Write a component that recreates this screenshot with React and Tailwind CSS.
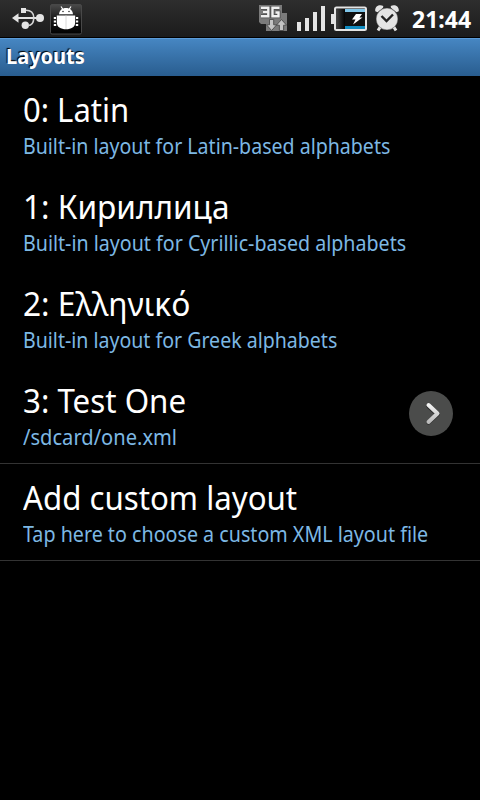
const rows = [
  { title: "0: Latin", sub: "Built-in layout for Latin-based alphabets", titleFit: "scale-x-[.94]", subFit: "scale-x-[.932]" },
  { title: "1: Кириллица", sub: "Built-in layout for Cyrillic-based alphabets", titleFit: "scale-x-[.957]", subFit: "scale-x-[.935]" },
  { title: "2: Ελληνικό", sub: "Built-in layout for Greek alphabets", titleFit: "scale-x-[.96]", subFit: "scale-x-[.931]" },
  { title: "3: Test One", sub: "/sdcard/one.xml", titleFit: "scale-x-[.948]", subFit: "scale-x-[.957]", more: true, line: true },
  { title: "Add custom layout", sub: "Tap here to choose a custom XML layout file", titleFit: "scale-x-[.946]", subFit: "scale-x-[.9375]", line: true },
];

function UsbIcon() {
  return (
    <svg className="ml-3 h-[37px] w-8 shrink-0" viewBox="12 0 32 37" fill="#e4e4e4">
      <path d="M12 18l6.500-4.700v9.400z" />
      <path d="M17 17h22v2H17z" />
      <circle cx="40" cy="18" r="4" />
      <path d="M21 8h5v5h-5z" />
      <circle cx="25.300" cy="25.300" r="3.700" />
      <path d="M26 10.300c5 0 7.500 2.500 7.800 7.200M28 25.500c4 0 5.600-3 5.800-7.500" fill="none" stroke="#d4d4d4" strokeWidth="1.600" />
    </svg>
  );
}

function DebugIcon() {
  return (
    <svg className="ml-1.5 h-[37px] w-8 shrink-0" viewBox="50 0 32 37">
      <defs>
        <linearGradient id="debug" x1="0" y1="0" x2="0" y2="1">
          <stop offset="0" stopColor="#4a4a4a" />
          <stop offset=".55" stopColor="#141414" />
          <stop offset="1" stopColor="#000" />
        </linearGradient>
      </defs>
      <rect x="50.500" y="4.500" width="31" height="29.500" rx="1.500" fill="url(#debug)" stroke="#484848" />
      <g fill="#fff">
        <path d="M59 14.300c.4-4.300 3.300-6.300 7-6.300s6.600 2 7 6.300z" />
        <path d="M56.800 15.500h18.400v7c0 4.500-4 6.800-9.200 6.800s-9.200-2.300-9.200-6.800z" />
        <path d="M53.800 17h2.200v2h-2.200zM53.800 20.500h2.200v2h-2.200zM53.800 24h2.400v2h-2.400zM76 17h2.200v2H76zM76 20.500h2.200v2H76zM75.800 24h2.400v2h-2.400z" />
      </g>
      <path d="M61 6.500l2 3M71 6.500l-2 3" stroke="#fff" strokeWidth="1.200" />
      <path d="M66 15.500v13.500" stroke="#d8d8d8" />
      <circle cx="63" cy="11.500" r=".8" fill="#333" />
      <circle cx="69" cy="11.500" r=".8" fill="#333" />
    </svg>
  );
}

function NetworkIcon() {
  return (
    <svg className="h-[37px] w-7 shrink-0" viewBox="259 0 28 37">
      <path d="M259 5h23v8h5v18h-21v-7h-5l-2-2z" fill="#7b7b7b" />
      <path d="M261 7.800h7.300v8.400H261M263 12h5M279.500 7.800h-7v8.400h6v-3.700h-3" fill="none" stroke="#4b4b4b" strokeWidth="4" />
      <path d="M261 7.800h7.300v8.400H261M263 12h5M279.500 7.800h-7v8.400h6v-3.700h-3" fill="none" stroke="#f0f0f0" strokeWidth="2.400" />
      <path d="M269.500 19.500h4.200v5.300h3l-5.100 5.700-5.100-5.700h3zM279.400 30.500h4.200v-5.300h3l-5.100-5.700-5.100 5.700h3z" fill="#c4c4c4" stroke="#4b4b4b" strokeWidth=".9" />
    </svg>
  );
}

function SignalIcon() {
  return (
    <svg className="ml-2 h-[37px] w-[31px] shrink-0" viewBox="295 0 31 37" fill="#e4e4e4">
      <path d="M297 22h4v9h-4zM305 18h4v13h-4zM313 12h4v19h-4zM321 6h4v25h-4z" />
    </svg>
  );
}

function BatteryIcon() {
  return (
    <svg className="ml-[5px] h-[37px] w-9 shrink-0" viewBox="331 0 36 37">
      <defs>
        <linearGradient id="cell" x1="0" y1="0" x2="1" y2="0">
          <stop offset="0" stopColor="#444" />
          <stop offset="1" stopColor="#050505" />
        </linearGradient>
      </defs>
      <path d="M331 14h4v10h-4z" fill="#e4e4e4" />
      <rect x="335" y="7.500" width="31" height="22.500" rx="1.500" fill="#101010" stroke="#e4e4e4" strokeWidth="2" />
      <path d="M336 9h9v20h-9z" fill="url(#cell)" />
      <path d="M345 9h20v3h-20z" fill="#7fc5e8" />
      <path d="M345 26h20v3h-20z" fill="#108bc0" />
      <path d="M356 14h6l-2.500 3.500h3L353 24.500l2.500-5H352z" fill="#fff" />
    </svg>
  );
}

function AlarmIcon() {
  return (
    <svg className="ml-2 h-[37px] w-6 shrink-0" viewBox="375 0 24 37">
      <path d="M375.300 11.300c-.8-4.500 3.500-7.300 8-5.300l-.3 1.700-5.500 4.600zM398.700 11.300c.8-4.500-3.500-7.300-8-5.300l.3 1.700 5.500 4.600z" fill="#e4e4e4" />
      <path d="M380.500 26.500l-2.500 4M393.500 26.500l2.500 4" stroke="#e4e4e4" strokeWidth="3" />
      <circle cx="387" cy="19" r="10.900" fill="#e4e4e4" stroke="#252525" strokeWidth=".4" />
      <path d="M381.500 16l5 5 6.500-6.500" fill="none" stroke="#222" strokeWidth="2.400" />
    </svg>
  );
}

function MoreButton() {
  return (
    <svg className="mr-[27px] mb-[3px] h-[45px] w-11 shrink-0" viewBox="409 391 44 45">
      <defs>
        <linearGradient id="chevron" x1="0" y1="0" x2="0" y2="1">
          <stop offset="0" stopColor="#f4f4f4" />
          <stop offset="1" stopColor="#bbb" />
        </linearGradient>
      </defs>
      <ellipse cx="431" cy="413.500" rx="22" ry="22.500" fill="#4b4c4b" />
      <path d="M428.500 406.500l9 8-9 8" fill="none" stroke="#2b2b2b" strokeWidth="4.200" strokeLinecap="round" strokeLinejoin="round" />
      <path d="M428.500 405l9 8.500-9 8.500" fill="none" stroke="url(#chevron)" strokeWidth="4" strokeLinecap="round" strokeLinejoin="round" />
    </svg>
  );
}

export default function App() {
  return (
    <div className="flex h-[800px] w-[480px] flex-col overflow-hidden bg-black font-['Noto_Sans','Open_Sans',sans-serif] text-white">
      <div className="flex h-[38px] shrink-0 items-start border-b border-black bg-linear-to-b from-[#2e2e2e] to-[#1b1b1b]">
        <UsbIcon />
        <DebugIcon />
        <div className="ml-auto flex">
          <NetworkIcon />
          <SignalIcon />
          <BatteryIcon />
          <AlarmIcon />
          <span className="ml-[13px] w-[68px] whitespace-nowrap text-[23px] leading-[38px] font-bold">21:44</span>
        </div>
      </div>
      <div className="flex h-[38px] shrink-0 items-start border-t border-[#5b9bd8] bg-linear-to-b from-[#4686c2] to-[#295d8f] pl-1.5">
        <span className="origin-left scale-x-[.952] text-[21px] leading-[35px] font-bold [text-shadow:-1px_-1px_1px_#000]">Layouts</span>
      </div>
      {rows.map((r) => (
        <div key={r.title} className={`flex h-[97px] shrink-0 items-center border-b ${r.line ? "border-[#333]" : "border-transparent"}`}>
          <div className="flex h-full flex-1 flex-col items-start pt-3.5 pl-[23px] whitespace-nowrap">
            <span className={`origin-left text-[33px] leading-10 ${r.titleFit}`}>{r.title}</span>
            <span className={`mt-0.5 origin-left text-[21px] leading-7 text-[#7db8e4] ${r.subFit}`}>{r.sub}</span>
          </div>
          {r.more && <MoreButton />}
        </div>
      ))}
    </div>
  );
}
